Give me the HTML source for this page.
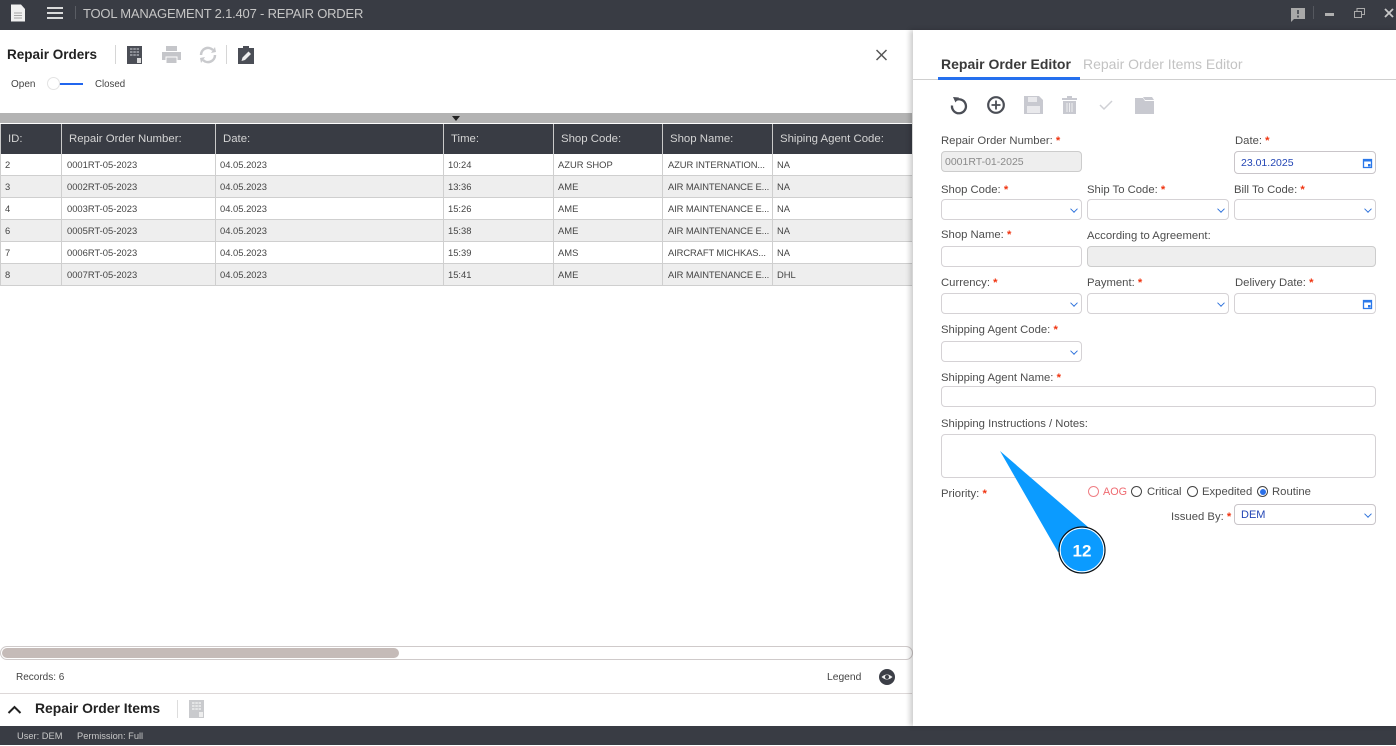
<!DOCTYPE html>
<html lang="en"><head><meta charset="utf-8"><title>Tool Management - Repair Order</title>
<style>
*{box-sizing:border-box}
html,body{margin:0;padding:0;width:1396px;height:746px;overflow:hidden;background:#fff;font-family:"Liberation Sans",sans-serif;color:#444}
.a{position:absolute;white-space:nowrap}
#top{left:0;top:0;width:1396px;height:30px;background:#393c44}
#status{left:0;top:726px;width:1396px;height:19px;background:#393c44;color:#c8c8c8;font-size:9.3px;line-height:20px}
.bar{background:#b3b3b3}
.th{position:absolute;top:124px;height:30px;background:#393c44;color:#d4d4d4;font-size:11.4px;line-height:30px;border-left:1px solid #c9c9c9;padding-left:7px;white-space:nowrap}
.row{position:absolute;left:0;width:912px;height:22px;border-bottom:1px solid #cfcfcf;font-size:9.4px;line-height:21px;color:#444}
.row.alt{background:#eeeeee}
.row span{position:absolute;top:0;height:22px;border-left:1px solid #cfcfcf;padding-left:4px;white-space:nowrap}
.row span:nth-child(2),.row span:nth-child(6){padding-left:5px}
.row span:nth-child(6){letter-spacing:-.1px}
.l{position:absolute;font-size:11.3px;line-height:14px;margin-top:1px;color:#4d4d4d;white-space:nowrap}
.l b{color:#f0330f;font-weight:700}
.f{position:absolute;border:1px solid #d5d2d5;border-radius:4px;background:#fff;font-size:10.5px;color:#2346b5}
.f.g{background:#eeeeee;border-color:#cccccc;color:#8a8a8a}
.f.s::after{content:"";position:absolute;right:4px;top:6px;width:5px;height:5px;border-right:1.4px solid #2a6fdb;border-bottom:1.4px solid #2a6fdb;transform:rotate(45deg) scale(.9)}
.f span{position:absolute;left:5px;top:3px;line-height:14px;white-space:nowrap}
.r{position:absolute;top:486px;width:11px;height:11px;border:1.3px solid #444;border-radius:50%;background:#fff}
</style></head><body>

<div class="a" id="top"></div>
<svg class="a" style="left:11px;top:4px" width="15" height="18" viewBox="0 0 15 18"><path d="M0 1v16.500h14V5L10 .5H0z" fill="#f0f0f0"/><path d="M3 9h8M3 11.500h8M3 14h8" stroke="#a5a5a5"/></svg>
<svg class="a" style="left:47px;top:7px" width="17" height="12"><path d="M0 1h16M0 6h16M0 11h16" stroke="#f0f0f0" stroke-width="1.700"/></svg>
<div class="a" style="left:75px;top:6px;width:1px;height:13px;background:#5a5d64"></div>
<div class="a" style="left:83px;top:5px;color:#c6c6c6;font-size:13px;line-height:17px;letter-spacing:-.2px">TOOL MANAGEMENT 2.1.407 - REPAIR ORDER</div>
<svg class="a" style="left:1290px;top:7px" width="16" height="15"><path d="M1 1h14v11H4l-3 3z" fill="#a9a9a9"/><path d="M8 3v4M8 8.500v2" stroke="#393c44" stroke-width="1.500"/></svg>
<div class="a" style="left:1313px;top:6px;width:1px;height:13px;background:#55585f"></div>
<div class="a" style="left:1325px;top:13px;width:9px;height:3px;background:#b0b0b0"></div>
<svg class="a" style="left:1354px;top:8px" width="11" height="10"><path d="M.5 3.500h7v6h-7zM3 3V.5h7.500v6H8" fill="none" stroke="#aaa"/></svg>
<svg class="a" style="left:1384px;top:8px" width="10" height="10"><path d="M1 1l8 8M9 1l-8 8" stroke="#c8c8c8" stroke-width="1.800"/></svg>

<div class="a" style="left:7px;top:46px;font-size:13.500px;line-height:17px;font-weight:700;color:#222">Repair Orders</div>
<div class="a" style="left:115px;top:45px;width:1px;height:19px;background:#d6d6d6"></div>
<svg class="a" style="left:127px;top:46px" width="15" height="18"><path d="M0 0h15v18H0z" fill="#4b4e56"/><path d="M3 3h9M3 6h9M3 9h9" stroke="#a5a7ad" stroke-width="1.500" stroke-dasharray="2.500 .8"/><path d="M10 12h4v5h-4z" fill="#ddd"/></svg>
<svg class="a" style="left:162px;top:46px" width="19" height="18"><path d="M4 0h11v5H4z" fill="#c5c6ca"/><path d="M0 6h19v8H0z" fill="#c5c6ca"/><path d="M4 11h11v6.500H4z" fill="#c5c6ca" stroke="#fff"/></svg>
<svg class="a" style="left:198px;top:46px" width="20" height="18" viewBox="0 0 20 18"><path d="M3 9a7 7 0 0 1 12-5M17 9A7 7 0 0 1 5 14" fill="none" stroke="#c9cacd" stroke-width="2.500"/><path d="M13 7l5-1-1-5zM7 11l-5 1 1 5z" fill="#c9cacd"/></svg>
<div class="a" style="left:226px;top:45px;width:1px;height:19px;background:#d6d6d6"></div>
<svg class="a" style="left:238px;top:46px" width="16" height="18"><path d="M0 2h5V0h6v2h5v16H0z" fill="#4b4e56"/><path d="M3.500 15l1-3.500 6-6 2.500 2.500-6 6z" fill="#eee"/></svg>
<svg class="a" style="left:876px;top:49px" width="11" height="12"><path d="M.5 1l10 10M10.500 1L.5 11" stroke="#555" stroke-width="1.500"/></svg>

<div class="a" style="left:11px;top:78px;font-size:10px;line-height:13px;color:#444">Open</div>
<div class="a" style="left:54px;top:83px;width:29px;height:2px;background:#2166ee"></div>
<div class="a" style="left:47px;top:77px;width:13px;height:13px;border-radius:50%;background:#fff;border:1px solid #e3e3e3"></div>
<div class="a" style="left:95px;top:78px;font-size:9.700px;line-height:13px;color:#444">Closed</div>

<div class="a bar" style="left:0;top:113px;width:912px;height:10px"></div>
<div class="a" style="left:452px;top:116px;width:0;height:0;border-left:4px solid transparent;border-right:4px solid transparent;border-top:5px solid #222"></div>

<div class="th" style="left:0;width:61px">ID:</div>
<div class="th" style="left:61px;width:154px">Repair Order Number:</div>
<div class="th" style="left:215px;width:228px">Date:</div>
<div class="th" style="left:443px;width:110px">Time:</div>
<div class="th" style="left:553px;width:109px">Shop Code:</div>
<div class="th" style="left:662px;width:110px">Shop Name:</div>
<div class="th" style="left:772px;width:140px">Shiping Agent Code:</div>

<div class="row" style="top:154px"><span style="left:0">2</span><span style="left:61px">0001RT-05-2023</span><span style="left:215px">04.05.2023</span><span style="left:443px">10:24</span><span style="left:553px">AZUR SHOP</span><span style="left:662px">AZUR INTERNATION...</span><span style="left:772px">NA</span></div>
<div class="row alt" style="top:176px"><span style="left:0">3</span><span style="left:61px">0002RT-05-2023</span><span style="left:215px">04.05.2023</span><span style="left:443px">13:36</span><span style="left:553px">AME</span><span style="left:662px">AIR MAINTENANCE E...</span><span style="left:772px">NA</span></div>
<div class="row" style="top:198px"><span style="left:0">4</span><span style="left:61px">0003RT-05-2023</span><span style="left:215px">04.05.2023</span><span style="left:443px">15:26</span><span style="left:553px">AME</span><span style="left:662px">AIR MAINTENANCE E...</span><span style="left:772px">NA</span></div>
<div class="row alt" style="top:220px"><span style="left:0">6</span><span style="left:61px">0005RT-05-2023</span><span style="left:215px">04.05.2023</span><span style="left:443px">15:38</span><span style="left:553px">AME</span><span style="left:662px">AIR MAINTENANCE E...</span><span style="left:772px">NA</span></div>
<div class="row" style="top:242px"><span style="left:0">7</span><span style="left:61px">0006RT-05-2023</span><span style="left:215px">04.05.2023</span><span style="left:443px">15:39</span><span style="left:553px">AMS</span><span style="left:662px">AIRCRAFT MICHKAS...</span><span style="left:772px">NA</span></div>
<div class="row alt" style="top:264px"><span style="left:0">8</span><span style="left:61px">0007RT-05-2023</span><span style="left:215px">04.05.2023</span><span style="left:443px">15:41</span><span style="left:553px">AME</span><span style="left:662px">AIR MAINTENANCE E...</span><span style="left:772px">DHL</span></div>

<div class="a" style="left:0;top:646px;width:913px;height:14px;border:1px solid #cfcaca;border-radius:7px;background:#fff"></div>
<div class="a" style="left:2px;top:648px;width:397px;height:10px;border-radius:5px;background:#c5bbb8"></div>
<div class="a" style="left:16px;top:671px;font-size:10px;line-height:13px;color:#444">Records: 6</div>
<div class="a" style="left:827px;top:671px;font-size:10.300px;line-height:14px;color:#444">Legend</div>
<svg class="a" style="left:879px;top:669px" width="16" height="16"><circle cx="8" cy="8" r="8" fill="#3c3f47"/><path d="M2.500 8Q8 3 13.500 8 8 13 2.500 8z" fill="#eee"/><circle cx="8" cy="8" r="2" fill="#3c3f47"/></svg>
<div class="a" style="left:0;top:693px;width:912px;height:1px;background:#ddd8d8"></div>
<svg class="a" style="left:7px;top:704px" width="15" height="11"><path d="M1.500 9L7.500 3l6 6" fill="none" stroke="#222" stroke-width="2"/></svg>
<div class="a" style="left:35px;top:700px;font-size:13.900px;line-height:17px;font-weight:700;color:#222">Repair Order Items</div>
<div class="a" style="left:177px;top:700px;width:1px;height:18px;background:#ddd"></div>
<svg class="a" style="left:189px;top:700px" width="15" height="18"><path d="M0 0h15v18H0z" fill="#c9cacd"/><path d="M3 3h9M3 6h9M3 9h9" stroke="#eee" stroke-width="1.500" stroke-dasharray="2.500 .8"/><path d="M10 12h4v5h-4z" fill="#eee"/></svg>

<div class="a" id="status"><span class="a" style="left:17px;top:0">User: DEM</span><span class="a" style="left:77px;top:0">Permission: Full</span></div>

<div class="a" style="left:913px;top:30px;width:483px;height:696px;background:#fff;box-shadow:-3px 0 5px rgba(0,0,0,.2)"></div>

<div class="a" style="left:941px;top:56px;font-size:14px;line-height:17px;font-weight:700;color:#3a3a3a">Repair Order Editor</div>
<div class="a" style="left:1083px;top:56px;font-size:14px;line-height:17px;color:#c3c3c3">Repair Order Items Editor</div>
<div class="a" style="left:913px;top:79px;width:483px;height:1px;background:#cfcfcf"></div>
<div class="a" style="left:938px;top:77px;width:142px;height:3px;background:#2570ee"></div>

<svg class="a" style="left:949px;top:95px" width="20" height="20"><path d="M6 5.500A7 7 0 1 1 3 10.500" fill="none" stroke="#4b4e56" stroke-width="2.300"/><path d="M4 2l6 .5-3.500 5z" fill="#4b4e56"/></svg>
<svg class="a" style="left:986px;top:95px" width="20" height="20"><circle cx="10" cy="10" r="7.800" fill="none" stroke="#4b4e56" stroke-width="2.200"/><path d="M10 5.500v9M5.500 10h9" stroke="#4b4e56" stroke-width="1.800"/></svg>
<svg class="a" style="left:1024px;top:96px" width="19" height="18"><path d="M0 0h15l4 4v14H0z" fill="#c8c9d0"/><path d="M4 1h9v5H4zM3 10h13v7H3z" fill="#fff" opacity=".6"/></svg>
<svg class="a" style="left:1061px;top:96px" width="17" height="18"><path d="M1 2h15v2H1zM6 0h5v2H6zM2 5h13v13H2z" fill="#c8c9d0"/><path d="M6 7v9M8.500 7v9M11 7v9" stroke="#fff" opacity=".7"/></svg>
<svg class="a" style="left:1099px;top:99px" width="15" height="12"><path d="M1 6l4 4 8-8" fill="none" stroke="#cfd0d5" stroke-width="1.500"/></svg>
<svg class="a" style="left:1135px;top:96px" width="19" height="18"><path d="M0 2h8l2 3h9v13H0z" fill="#c8c9d0"/><path d="M8 1h9l2 3H10z" fill="#c8c9d0"/></svg>

<div class="l" style="left:941px;top:133px">Repair Order Number: <b>*</b></div>
<div class="f g" style="left:941px;top:151px;width:141px;height:21px"><span style="top:3px;left:3px;font-size:10.500px">0001RT-01-2025</span></div>
<div class="l" style="left:1235px;top:133px">Date: <b>*</b></div>
<div class="f" style="left:1234px;top:151px;width:142px;height:23px;border-color:#c9c5c9"><span style="left:6px;top:4px">23.01.2025</span>
<svg style="position:absolute;right:2px;top:5px" width="11" height="12"><path d="M1.500 2.500h8v8h-8z" fill="none" stroke="#2a78ea" stroke-width="1.300"/><path d="M1 2h9v2.500H1zM6 7h2.500v2.500H6z" fill="#2a78ea"/></svg></div>

<div class="l" style="left:941px;top:182px">Shop Code: <b>*</b></div>
<div class="f s" style="left:941px;top:199px;width:141px;height:21px"></div>
<div class="l" style="left:1087px;top:182px">Ship To Code: <b>*</b></div>
<div class="f s" style="left:1087px;top:199px;width:142px;height:21px"></div>
<div class="l" style="left:1234px;top:182px">Bill To Code: <b>*</b></div>
<div class="f s" style="left:1234px;top:199px;width:142px;height:21px"></div>

<div class="l" style="left:941px;top:227px">Shop Name: <b>*</b></div>
<div class="f" style="left:941px;top:246px;width:141px;height:21px"></div>
<div class="l" style="left:1087px;top:228px">According to Agreement:</div>
<div class="f g" style="left:1087px;top:246px;width:289px;height:21px"></div>

<div class="l" style="left:941px;top:275px">Currency: <b>*</b></div>
<div class="f s" style="left:941px;top:293px;width:141px;height:21px"></div>
<div class="l" style="left:1087px;top:275px">Payment: <b>*</b></div>
<div class="f s" style="left:1087px;top:293px;width:142px;height:21px"></div>
<div class="l" style="left:1235px;top:275px">Delivery Date: <b>*</b></div>
<div class="f" style="left:1234px;top:293px;width:142px;height:21px">
<svg style="position:absolute;right:2px;top:4px" width="11" height="12"><path d="M1.500 2.500h8v8h-8z" fill="none" stroke="#2a78ea" stroke-width="1.300"/><path d="M1 2h9v2.500H1zM6 7h2.500v2.500H6z" fill="#2a78ea"/></svg></div>

<div class="l" style="left:941px;top:322px">Shipping Agent Code: <b>*</b></div>
<div class="f s" style="left:941px;top:341px;width:141px;height:21px"></div>
<div class="l" style="left:941px;top:370px">Shipping Agent Name: <b>*</b></div>
<div class="f" style="left:941px;top:386px;width:435px;height:21px"></div>
<div class="l" style="left:941px;top:416px">Shipping Instructions / Notes:</div>
<div class="f" style="left:941px;top:434px;width:435px;height:44px"></div>

<div class="l" style="left:941px;top:486px">Priority: <b>*</b></div>
<div class="r" style="left:1088px;border-color:#ef7f85"></div>
<div class="l" style="left:1103px;top:484px;color:#ef6a70;font-size:10.800px">AOG</div>
<div class="r" style="left:1131px"></div>
<div class="l" style="left:1147px;top:484px;font-size:11.300px">Critical</div>
<div class="r" style="left:1187px"></div>
<div class="l" style="left:1202px;top:484px;font-size:11.300px">Expedited</div>
<div class="r" style="left:1257px"></div>
<div class="a" style="left:1259.500px;top:488.500px;width:6px;height:6px;border-radius:50%;background:#2a6fe8"></div>
<div class="l" style="left:1272px;top:484px;font-size:11.300px">Routine</div>

<div class="l" style="left:1171px;top:509px">Issued By: <b>*</b></div>
<div class="f s" style="left:1234px;top:504px;width:142px;height:21px;border-color:#c9c5c9"><span style="left:6px;top:3px;font-size:11px">DEM</span></div>

<svg class="a" style="left:990px;top:440px" width="125" height="140">
<path d="M10 11L98 87 68 112z" fill="#0b9bff"/>
<circle cx="92" cy="110" r="23" fill="#0b9bff" stroke="#111" stroke-width="1.200"/>
<circle cx="92" cy="110" r="21.800" fill="none" stroke="#fff" stroke-width="1"/>
<text x="92" y="116.500" text-anchor="middle" font-family="Liberation Sans, sans-serif" font-size="17" font-weight="700" fill="#fff">12</text>
</svg>
</body></html>
